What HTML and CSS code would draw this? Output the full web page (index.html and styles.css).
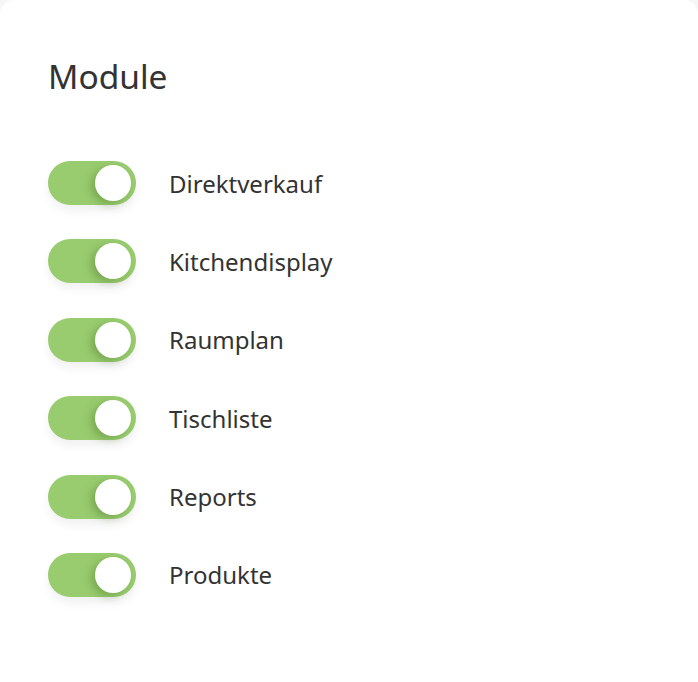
FILE: index.html
```html
<!DOCTYPE html>
<html lang="de">
<head>
    <meta charset="UTF-8">
    <meta name="viewport" content="width=device-width, initial-scale=1.0">
    <title>Module</title>
    <link rel="stylesheet" href="styles.css">
</head>
<body>

    <div class="card">
        <h2>Module</h2>

        <ul class="modules">
            <li class="module">
                <span class="toggle on"><span class="knob"></span></span>
                <span class="label">Direktverkauf</span>
            </li>
            <li class="module">
                <span class="toggle on"><span class="knob"></span></span>
                <span class="label">Kitchendisplay</span>
            </li>
            <li class="module">
                <span class="toggle on"><span class="knob"></span></span>
                <span class="label">Raumplan</span>
            </li>
            <li class="module">
                <span class="toggle on"><span class="knob"></span></span>
                <span class="label">Tischliste</span>
            </li>
            <li class="module">
                <span class="toggle on"><span class="knob"></span></span>
                <span class="label">Reports</span>
            </li>
            <li class="module">
                <span class="toggle on"><span class="knob"></span></span>
                <span class="label">Produkte</span>
            </li>
        </ul>
    </div>

</body>
</html>
```

FILE: styles.css
```css
html {
    background: #f6f6f6;
}

body {
    margin: 0;
    font-family: "Noto Sans", Arial, sans-serif;
    color: #333333;
}

.card {
    background: white;
    border-radius: 14px 14px 0 0;
    height: 682px;
    box-sizing: border-box;
    padding: 52px 48px;
}

h2 {
    font-size: 33.5px;
    font-weight: 400;
    margin: 0;
    line-height: 48px;
}

.modules {
    list-style: none;
    margin: 61px 0 0;
    padding: 0;
    display: flex;
    flex-direction: column;
    gap: 34.4px;
}

.module {
    display: flex;
    align-items: center;
    gap: 33px;
}

.toggle {
    width: 88px;
    height: 44px;
    border-radius: 22px;
    background: #99cc6f;
    position: relative;
    box-shadow: 0 6px 10px rgba(0, 0, 0, 0.06);
}

.knob {
    position: absolute;
    top: 4px;
    right: 5px;
    width: 36px;
    height: 36px;
    border-radius: 50%;
    background: white;
    box-shadow: -4px 3px 8px rgba(60, 100, 30, 0.35);
}

.label {
    font-size: 24px;
}
```
